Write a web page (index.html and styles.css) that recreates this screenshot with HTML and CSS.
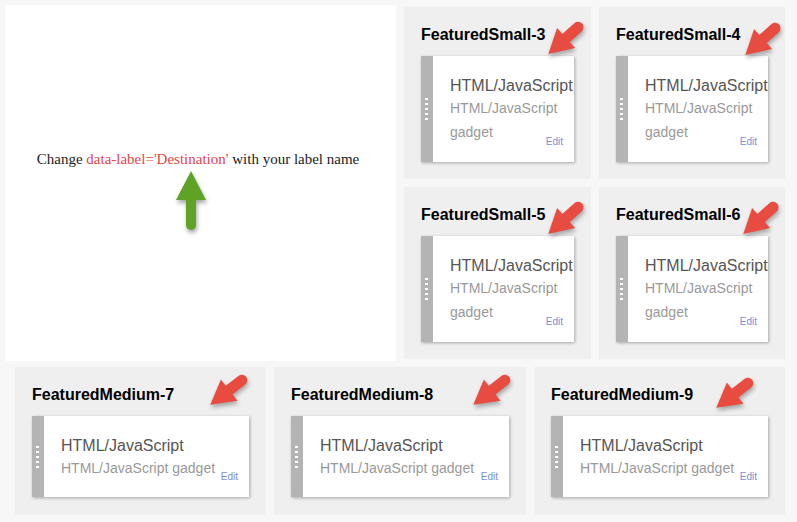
FILE: index.html
```html
<!DOCTYPE html>
<html>
<head>
<meta charset="utf-8">
<link rel="stylesheet" href="styles.css">
</head>
<body>
<div class="page">
  <div class="top">
    <div class="intro">
      <p class="note">Change <span class="hl">data-label='Destination'</span> with your label name</p>
      <svg class="up-arrow" width="30" height="60" viewBox="0 0 30 60">
        <line x1="15" y1="26" x2="15" y2="54" stroke="#5ea226" stroke-width="10" stroke-linecap="round"/>
        <polygon points="15,0 30,29 0,29" fill="#5ea226"/>
      </svg>
    </div>
    <div class="grid">
      <div class="panel small">
        <h3 class="ptitle">FeaturedSmall-3</h3>
        <svg class="red-arrow ra-s" width="50" height="50" viewBox="0 0 50 50"><g transform="rotate(228 25 25)"><line x1="25" y1="24" x2="25" y2="42.5" stroke="#e84b40" stroke-width="11" stroke-linecap="round"/><polygon points="25,2.5 38.5,26.5 11.5,26.5" fill="#e84b40"/></g></svg>
        <div class="card"><div class="handle"><i></i><i></i><i></i><i></i><i></i></div><div class="body"><div class="ctitle">HTML/JavaScript</div><div class="cdesc">HTML/JavaScript gadget</div><a class="edit">Edit</a></div></div>
      </div>
      <div class="panel small">
        <h3 class="ptitle">FeaturedSmall-4</h3>
        <svg class="red-arrow ra-s2" width="50" height="50" viewBox="0 0 50 50"><g transform="rotate(228 25 25)"><line x1="25" y1="24" x2="25" y2="42.5" stroke="#e84b40" stroke-width="11" stroke-linecap="round"/><polygon points="25,2.5 38.5,26.5 11.5,26.5" fill="#e84b40"/></g></svg>
        <div class="card"><div class="handle"><i></i><i></i><i></i><i></i><i></i></div><div class="body"><div class="ctitle">HTML/JavaScript</div><div class="cdesc">HTML/JavaScript gadget</div><a class="edit">Edit</a></div></div>
      </div>
      <div class="panel small">
        <h3 class="ptitle">FeaturedSmall-5</h3>
        <svg class="red-arrow ra-s" width="50" height="50" viewBox="0 0 50 50"><g transform="rotate(228 25 25)"><line x1="25" y1="24" x2="25" y2="42.5" stroke="#e84b40" stroke-width="11" stroke-linecap="round"/><polygon points="25,2.5 38.5,26.5 11.5,26.5" fill="#e84b40"/></g></svg>
        <div class="card"><div class="handle"><i></i><i></i><i></i><i></i><i></i></div><div class="body"><div class="ctitle">HTML/JavaScript</div><div class="cdesc">HTML/JavaScript gadget</div><a class="edit">Edit</a></div></div>
      </div>
      <div class="panel small">
        <h3 class="ptitle">FeaturedSmall-6</h3>
        <svg class="red-arrow ra-s" width="50" height="50" viewBox="0 0 50 50"><g transform="rotate(228 25 25)"><line x1="25" y1="24" x2="25" y2="42.5" stroke="#e84b40" stroke-width="11" stroke-linecap="round"/><polygon points="25,2.5 38.5,26.5 11.5,26.5" fill="#e84b40"/></g></svg>
        <div class="card"><div class="handle"><i></i><i></i><i></i><i></i><i></i></div><div class="body"><div class="ctitle">HTML/JavaScript</div><div class="cdesc">HTML/JavaScript gadget</div><a class="edit">Edit</a></div></div>
      </div>
    </div>
  </div>
  <div class="bottom">
    <div class="panel medium">
      <h3 class="ptitle">FeaturedMedium-7</h3>
      <svg class="red-arrow ra-m1" width="50" height="50" viewBox="0 0 50 50"><g transform="rotate(232 25 25)"><line x1="25" y1="24" x2="25" y2="42.5" stroke="#e84b40" stroke-width="11" stroke-linecap="round"/><polygon points="25,2.5 38.5,26.5 11.5,26.5" fill="#e84b40"/></g></svg>
      <div class="card"><div class="handle"><i></i><i></i><i></i><i></i><i></i></div><div class="body"><div class="ctitle">HTML/JavaScript</div><div class="cdesc">HTML/JavaScript gadget</div><a class="edit">Edit</a></div></div>
    </div>
    <div class="panel medium">
      <h3 class="ptitle">FeaturedMedium-8</h3>
      <svg class="red-arrow ra-m2" width="50" height="50" viewBox="0 0 50 50"><g transform="rotate(232 25 25)"><line x1="25" y1="24" x2="25" y2="42.5" stroke="#e84b40" stroke-width="11" stroke-linecap="round"/><polygon points="25,2.5 38.5,26.5 11.5,26.5" fill="#e84b40"/></g></svg>
      <div class="card"><div class="handle"><i></i><i></i><i></i><i></i><i></i></div><div class="body"><div class="ctitle">HTML/JavaScript</div><div class="cdesc">HTML/JavaScript gadget</div><a class="edit">Edit</a></div></div>
    </div>
    <div class="panel medium">
      <h3 class="ptitle">FeaturedMedium-9</h3>
      <svg class="red-arrow ra-m3" width="50" height="50" viewBox="0 0 50 50"><g transform="rotate(232 25 25)"><line x1="25" y1="24" x2="25" y2="42.5" stroke="#e84b40" stroke-width="11" stroke-linecap="round"/><polygon points="25,2.5 38.5,26.5 11.5,26.5" fill="#e84b40"/></g></svg>
      <div class="card"><div class="handle"><i></i><i></i><i></i><i></i><i></i></div><div class="body"><div class="ctitle">HTML/JavaScript</div><div class="cdesc">HTML/JavaScript gadget</div><a class="edit">Edit</a></div></div>
    </div>
  </div>
</div>
</body>
</html>
```
FILE: styles.css
```css
html, body {
  margin: 0;
  padding: 0;
  background: #f7f7f7;
}
.page {
  width: 797px;
  height: 522px;
  font-family: "Liberation Sans", Arial, sans-serif;
}
.top {
  display: flex;
  align-items: flex-start;
  gap: 8px;
  padding: 5px 0 0 5px;
}
.intro {
  width: 391px;
  height: 356px;
  background: #fff;
  display: flex;
  flex-direction: column;
  align-items: center;
  box-sizing: border-box;
  padding-top: 146px;
}
.note {
  margin: 0 5px 0 0;
  font-family: "Liberation Serif", "Times New Roman", serif;
  font-size: 15px;
  line-height: 17px;
  color: #222;
}
.hl {
  color: #e8444a;
}
.up-arrow {
  display: block;
  margin-top: 3px;
  margin-right: 19px;
  filter: drop-shadow(1px 3px 2px rgba(0, 0, 0, 0.35));
}
.grid {
  margin-top: 2px;
  display: grid;
  grid-template-columns: 187px 186px;
  grid-template-rows: 172px 172px;
  gap: 8px;
}
.panel {
  position: relative;
  background: #efefef;
  box-sizing: border-box;
  padding: 18px 17px 0 17px;
}
.ptitle {
  margin: 0 0 11px 0;
  font-size: 16px;
  line-height: 20px;
  font-weight: bold;
  color: #000;
}
.red-arrow {
  position: absolute;
  filter: drop-shadow(1px 3px 2px rgba(0, 0, 0, 0.3));
}
.ra-s { left: 136px; top: 7px; }
.ra-s2 { left: 138px; top: 8px; }
.ra-m1 { left: 188px; top: -1px; }
.ra-m2 { left: 192px; top: -1px; }
.ra-m3 { left: 175px; top: 2px; }
.card {
  display: flex;
  background: #fff;
  box-shadow: 1px 1px 3px rgba(0, 0, 0, 0.3);
}
.handle {
  width: 12px;
  flex: none;
  background: #b4b4b4;
  display: flex;
  flex-direction: column;
  align-items: center;
  justify-content: center;
  gap: 3px;
}
.handle i {
  display: block;
  width: 3px;
  height: 2px;
  background: #fff;
  margin-right: 1px;
}
.body {
  position: relative;
  flex: 1;
  min-width: 0;
  overflow: hidden;
  padding: 19px 0 18px 17px;
}
.medium .body {
  padding-bottom: 17px;
}
.ctitle {
  font-size: 16px;
  line-height: 21px;
  color: #555;
  white-space: nowrap;
}
.cdesc {
  font-size: 14px;
  line-height: 24px;
  color: #999;
}
.edit {
  position: absolute;
  right: 11px;
  bottom: 14px;
  font-size: 10px;
  line-height: 12px;
  color: #7890cf;
}
.bottom {
  display: flex;
  gap: 8px;
  padding: 6px 0 0 15px;
}
.medium {
  height: 148px;
  width: 251px;
}
.medium:nth-child(2) {
  width: 252px;
}
```
